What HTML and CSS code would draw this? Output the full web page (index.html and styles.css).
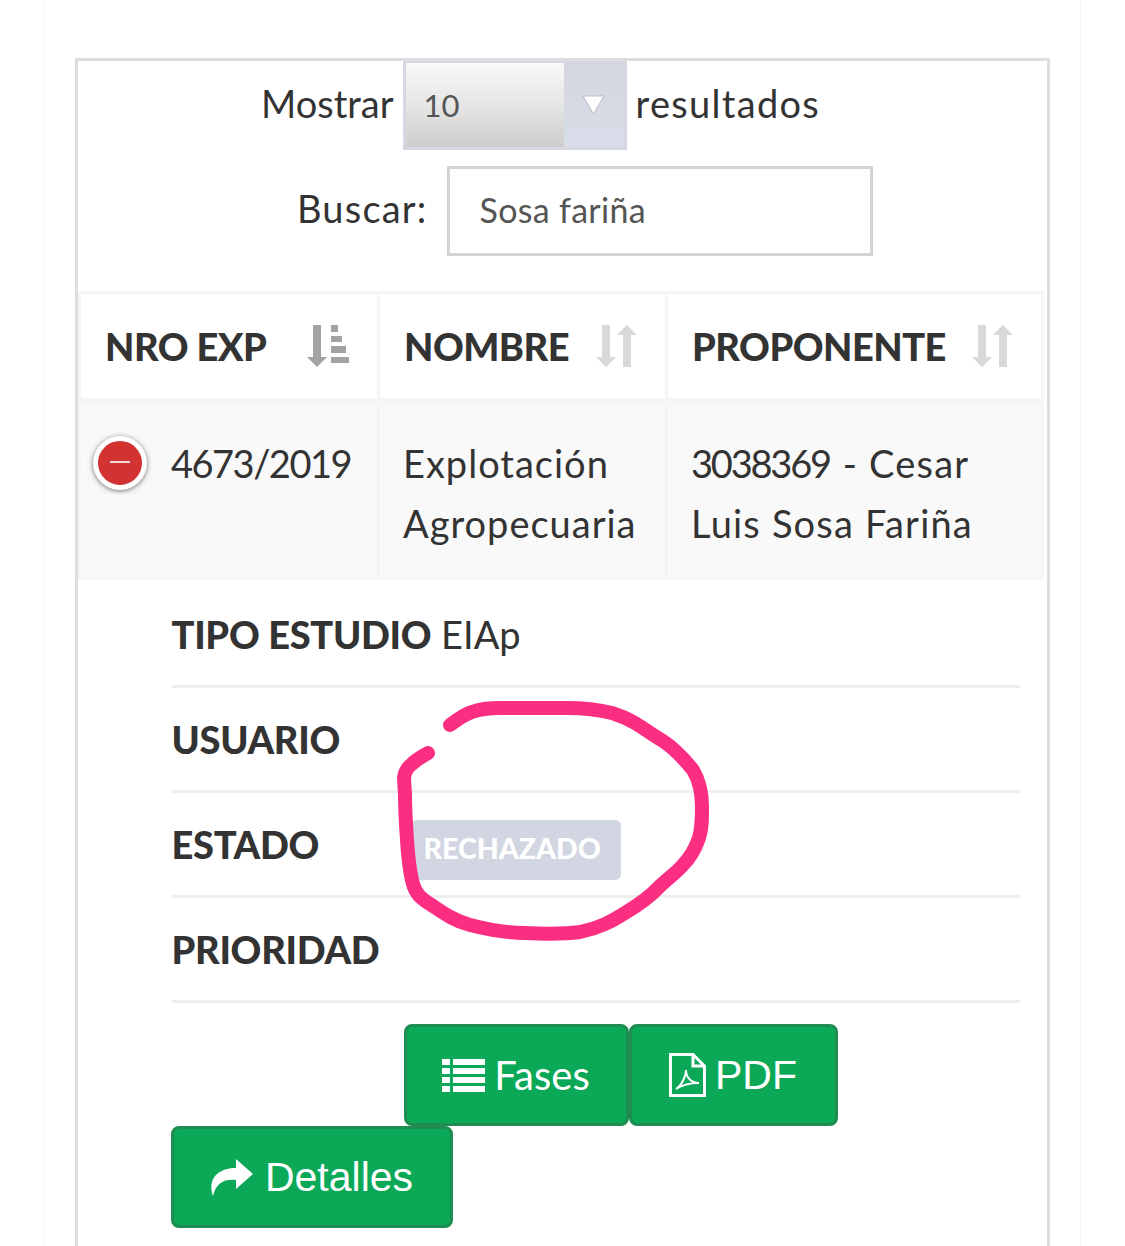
FILE: index.html
```html
<!DOCTYPE html>
<html lang="es">
<head>
    <meta charset="UTF-8">
    <meta name="viewport" content="width=device-width, initial-scale=1.0">
    <title>Expedientes</title>
    <link rel="stylesheet" href="styles.css">
</head>
<body>
    <div class="page">
        <div class="box">
            <div class="filter filter-length">
                <span>Mostrar</span>
                <div class="select">
                    <span class="select-value">10</span>
                    <span class="select-arrow">
                        <svg width="23" height="20" viewBox="0 0 23 20"><path d="M1 1H22L11.500 19Z" fill="#fff" stroke="#b9bcc6" stroke-width="1"/></svg>
                    </span>
                </div>
                <span class="filter-suffix">resultados</span>
            </div>
            <div class="filter filter-search">
                <label for="buscar">Buscar:</label>
                <input id="buscar" type="text" value="Sosa fariña">
            </div>

            <table>
                <thead>
                    <tr>
                        <th class="col-exp">
                            <div class="th-inner">NRO EXP
                                <svg width="42" height="42" viewBox="0 0 42 42" fill="#a3a3a3"><path d="M6 0H14V32H20L10 42L0 32H6Z"/><path d="M24 0H31V7H24ZM24 11H35V17H24ZM24 21H39V28H24ZM24 32H42V38H24Z"/></svg>
                            </div>
                        </th>
                        <th class="col-name">
                            <div class="th-inner">NOMBRE
                                <svg width="41" height="42" viewBox="0 0 41 42" fill="#d9d9d9"><path d="M6 0H14V32H20L10 42L0 32H6Z"/><path d="M31 0L41 10H35V42H27V10H21Z"/></svg>
                            </div>
                        </th>
                        <th>
                            <div class="th-inner">PROPONENTE
                                <svg width="41" height="42" viewBox="0 0 41 42" fill="#d9d9d9"><path d="M6 0H14V32H20L10 42L0 32H6Z"/><path d="M31 0L41 10H35V42H27V10H21Z"/></svg>
                            </div>
                        </th>
                    </tr>
                </thead>
                <tbody>
                    <tr class="row-main">
                        <td class="cell-exp"><span class="toggle"></span>4673/2019</td>
                        <td>Explotación Agropecuaria</td>
                        <td class="cell-prop"><span class="num">3038369</span> - Cesar<br>Luis Sosa Fariña</td>
                    </tr>
                    <tr class="row-child">
                        <td colspan="3">
                            <ul class="details">
                                <li><b>TIPO ESTUDIO</b> EIAp</li>
                                <li><b>USUARIO</b></li>
                                <li><b class="label-wide">ESTADO</b><span class="badge">RECHAZADO</span></li>
                                <li><b>PRIORIDAD</b></li>
                            </ul>
                            <div class="actions">
                                <a href="#" class="btn btn-fases">
                                    <svg width="43" height="33" viewBox="0 0 43 33" fill="#fff"><path d="M0 0H8V6H0ZM11 0H43V6H11ZM0 9H8V15H0ZM11 9H43V15H11ZM0 18H8V24H0ZM11 18H43V24H11ZM0 27H8V33H0ZM11 27H43V33H11Z"/></svg>
                                    <span class="fases-text">Fases</span>
                                </a>
                                <a href="#" class="btn btn-pdf">
                                    <svg width="37" height="44" viewBox="0 0 37 44" fill="none" stroke="#fff" stroke-width="3"><path d="M1.500 1.500H24L35.500 13V42.500H1.500Z"/><path d="M24 1.500V13H35.500"/><path d="M7 36C12 33 17 24 17 17C17 25 23 30 30 30C23 30 13 32 7 36Z" stroke-width="2"/></svg>
                                    PDF
                                </a>
                                <a href="#" class="btn btn-detalles">
                                    <svg width="43" height="37" viewBox="0 0 43 37" fill="#fff"><path d="M26 0L43 15L26 30V21C14 20 6 24 3 37C-3 20 8 9 26 9Z"/></svg>
                                    Detalles
                                </a>
                            </div>
                        </td>
                    </tr>
                </tbody>
            </table>
        </div>
    </div>

    <!-- marker drawn on top of the screenshot -->
    <svg class="marker" width="1125" height="1246" viewBox="0 0 1125 1246" fill="none" stroke="#fc2e82" stroke-width="14" stroke-linecap="round" stroke-linejoin="round">
        <path d="M450 725C458 719 465 714 472 712C480 709 490 708 500 708L567 708C585 708 600 710 612 713C622 716 628 719 635 723C645 729 654 736 663 741C675 749 685 760 693 770C699 780 702 792 702 807C702 820 702 828 699 838C695 850 690 858 682 866C675 874 668 878 660 886C650 897 640 904 625 913C612 921 600 928 580 932C565 934 545 934 525 933C505 933 490 930 470 925C455 921 445 914 433 906C420 898 416 894 413 884C409 870 408 855 407 840C406 825 405 810 405 795L404 778C405 770 408 767 412 764C417 759 423 756 428 753"/>
    </svg>
</body>
</html>
```

FILE: styles.css
```css
html, body {
    margin: 0;
    height: 100%;
}

body {
    position: relative;
    overflow: hidden;
    background: #fff;
    color: #333;
    font-family: 'Lato', sans-serif;
    font-size: 38px;
}

.page {
    box-sizing: border-box;
    height: 100%;
    margin: 0 44px;
    padding: 58px 30px 0;
    border-left: 1px solid #f6f6f6;
    border-right: 1px solid #f6f6f6;
    overflow: hidden;
}

.box {
    box-sizing: border-box;
    height: 100%;
    padding-right: 3px;
    border: 3px solid #dddde0;
    border-bottom: none;
}

.filter {
    display: flex;
    align-items: center;
}

.filter > span,
.filter > label {
    padding-bottom: 6px;
}

.filter-length {
    gap: 9px;
    height: 89px;
    padding-left: 183px;
}

.filter-suffix {
    letter-spacing: 1.300px;
}

.filter-search {
    gap: 19px;
    height: 90px;
    margin-top: 16px;
    padding-left: 219px;
}

.filter-search label {
    letter-spacing: 1.200px;
}

.select {
    display: flex;
    box-sizing: border-box;
    width: 224px;
    height: 89px;
    border: 3px solid #d6d7e0;
    border-top-width: 2px;
}

.select-value {
    flex: 1;
    padding-left: 18px;
    line-height: 84px;
    font-size: 31px;
    color: #555;
    background: linear-gradient(#f8f8f8, #e6e6e6 50%, #cdcdcd);
}

.select-arrow {
    display: flex;
    justify-content: center;
    width: 60px;
    padding-top: 32px;
    box-sizing: border-box;
    background: linear-gradient(#d4d6df, #d8dde9);
}

.filter-search input {
    box-sizing: border-box;
    width: 426px;
    height: 90px;
    padding: 0 30px 4px;
    border: 3px solid #d4d4d8;
    outline: none;
    font-family: inherit;
    font-size: 34px;
    letter-spacing: 0.300px;
    color: #555;
}

table {
    width: 966px;
    margin: 35px 0 0;
    border-collapse: collapse;
    table-layout: fixed;
}

th, td {
    box-sizing: border-box;
    border: 3px solid #f5f5f5;
    text-align: left;
    vertical-align: top;
}

.col-exp {
    width: 299px;
}

.col-name {
    width: 288px;
}

th {
    height: 109px;
    padding: 0 28px 0 24px;
    border-bottom-width: 8px;
    font-weight: 900;
    vertical-align: middle;
}

.th-inner {
    display: flex;
    justify-content: space-between;
    align-items: center;
    white-space: nowrap;
    letter-spacing: -0.500px;
}

.row-main td {
    height: 177px;
    padding: 27px 10px 0 23px;
    background: #f9f9f9;
    line-height: 60px;
    letter-spacing: 1px;
}

.row-main .cell-exp {
    position: relative;
    padding-left: 90px;
    white-space: nowrap;
    letter-spacing: -1.500px;
}

.row-main .cell-prop {
    letter-spacing: 1.200px;
}

.num {
    margin-right: 2px;
    letter-spacing: -2.200px;
}

.toggle {
    position: absolute;
    left: 12px;
    top: 30px;
    box-sizing: border-box;
    width: 54px;
    height: 54px;
    border: 5px solid #fff;
    border-radius: 50%;
    background: #d33232;
    box-shadow: 0 1px 5px rgba(0, 0, 0, 0.55);
}

.toggle::after {
    content: '';
    position: absolute;
    left: 12px;
    right: 12px;
    top: 20px;
    height: 2px;
    background: #f5dcdc;
}

.row-child td {
    padding: 3px 23px 0 92px;
    border: none;
}

.details {
    margin: 0;
    padding: 0;
    list-style: none;
}

.details li {
    height: 102px;
    line-height: 102px;
    border-bottom: 3px solid #eeeeee;
}

.details b {
    font-weight: 900;
    letter-spacing: -0.300px;
}

.details .label-wide {
    display: inline-block;
    width: 239px;
}

.badge {
    display: inline-block;
    vertical-align: middle;
    height: 60px;
    margin-top: 2px;
    line-height: 57px;
    padding: 0 20px 0 13px;
    border-radius: 6px;
    background: #d2d5e2;
    color: #fff;
    font-size: 28.500px;
    font-weight: 900;
}

.actions {
    display: flex;
    flex-wrap: wrap;
    margin: 21px 0 0 -1px;
}

.btn {
    display: flex;
    justify-content: center;
    align-items: center;
    gap: 9px;
    box-sizing: border-box;
    height: 102px;
    border: 3px solid #1f8c52;
    border-radius: 8px;
    background: #0aa857;
    color: #fff;
    font-family: 'Liberation Sans', sans-serif;
    font-size: 41px;
    text-decoration: none;
}

.btn-fases {
    width: 225px;
    margin-left: 233px;
}

.fases-text {
    font-family: 'Lato', sans-serif;
    font-size: 40px;
}

.btn-pdf {
    width: 209px;
}

.btn-detalles {
    width: 282px;
    gap: 12px;
}

.marker {
    position: absolute;
    left: 0;
    top: 0;
    pointer-events: none;
}
```
